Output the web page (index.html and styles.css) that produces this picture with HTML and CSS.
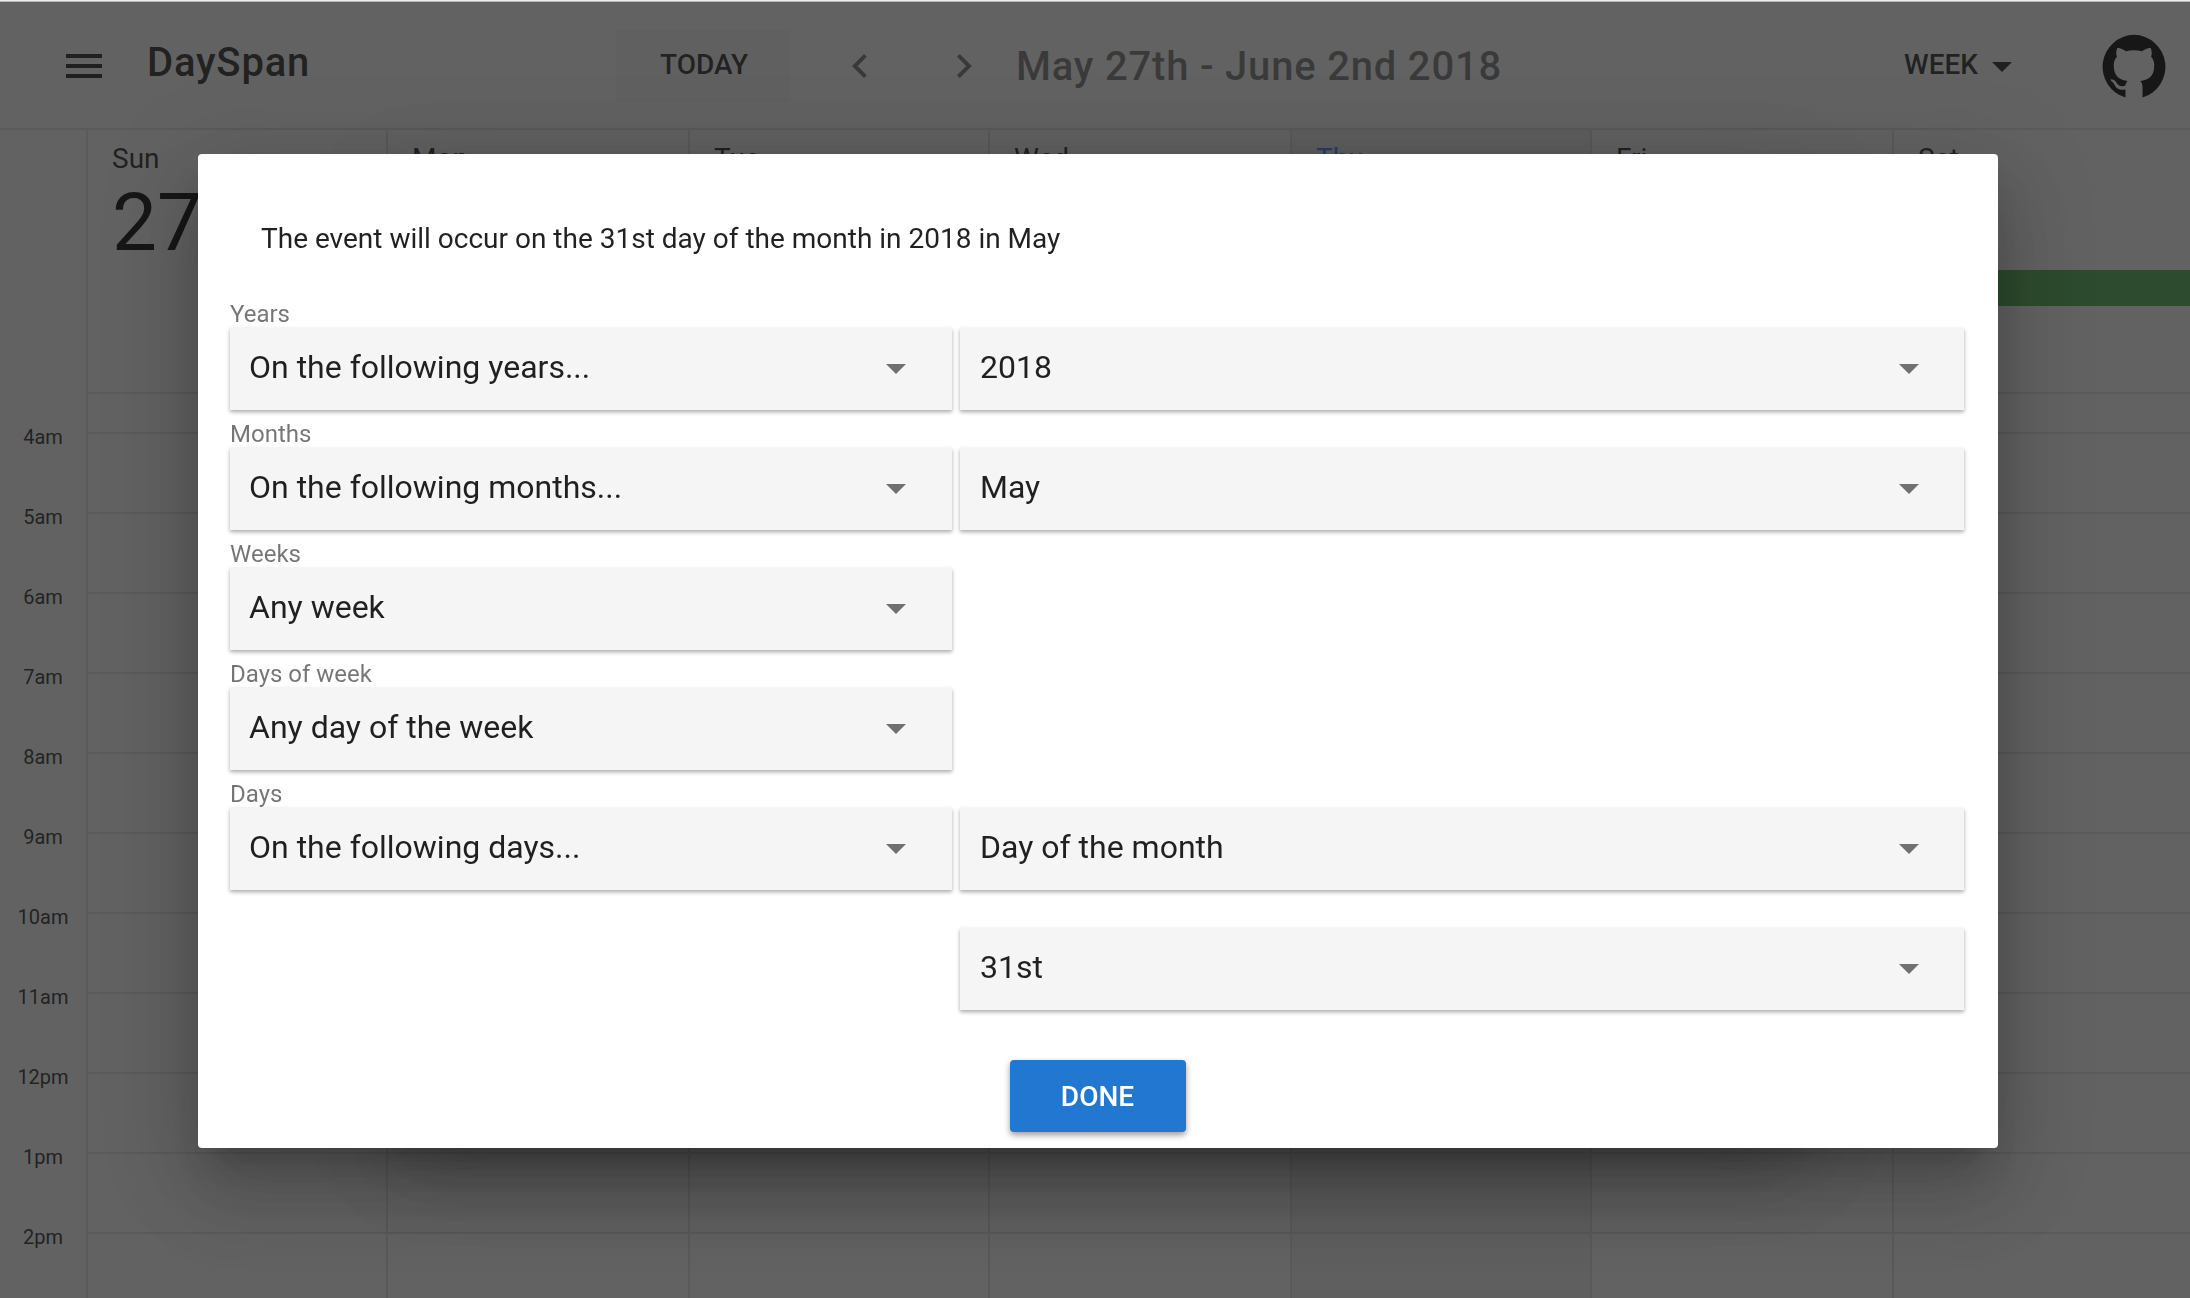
FILE: index.html
```
<!DOCTYPE html>
<html lang="en">
<head>
<meta charset="utf-8">
<title>DaySpan</title>
<link rel="stylesheet" href="styles.css">
</head>
<body>
<div class="app">
  <header class="toolbar">
    <svg class="menu-icon" viewBox="0 0 36 24"><path d="M0 0h36v4H0zM0 10h36v4H0zM0 20h36v4H0z"/></svg>
    <h1 class="brand">DaySpan</h1>
    <button class="today">TODAY</button>
    <svg class="chevron prev" viewBox="0 0 15 24"><path d="M14.8 2.8 12 0 0 12l12 12 2.8-2.8L5.600 12z"/></svg>
    <svg class="chevron next" viewBox="0 0 15 24"><path d="M0 2.800 2.800 0l12 12-12 12L0 21.200 9.200 12z"/></svg>
    <div class="range">May 27th - June 2nd 2018</div>
    <div class="view">WEEK<svg class="view-caret" viewBox="0 0 20 10"><path d="M0 0h20L10 10z"/></svg></div>
    <svg class="github" viewBox="0 0 24 24"><path d="M12 .3a12 12 0 0 0-3.200 23.500V20.800c-2.600.4-3.500-.6-4-1.600-.3-.6-.7-1.200-1.300-1.600-.4-.2-.6-.6 0-.6 1 0 1.700.9 2 1.400 1 1.400 2 1.300 3.300.9.100-.8.400-1.300.8-1.700-2.700-.3-5.200-1.500-5.200-5.900 0-1.300.4-2.300 1.200-3.200-.2-.4-.5-1.600.1-3.200 0 0 1-.3 3.300 1.200a11.500 11.500 0 0 1 6 0c2.300-1.500 3.300-1.200 3.300-1.200.6 1.600.3 2.800.1 3.200.8.900 1.200 1.900 1.200 3.200 0 4.500-2.500 5.600-5.200 5.900.5.500.8 1.300.8 2.400v3.800A12 12 0 0 0 12 .3z"/></svg>
  </header>
  <main class="week">
    <div class="day-heads">
      <div class="gutter"></div>
      <div class="day">Sun<b>27</b></div>
      <div class="day">Mon</div>
      <div class="day">Tue</div>
      <div class="day">Wed</div>
      <div class="day today-col">Thu</div>
      <div class="day">Fri</div>
      <div class="day sat">Sat<div class="event"></div></div>
    </div>
    <div class="hours">
      <div class="labels"><span>4am</span><span>5am</span><span>6am</span><span>7am</span><span>8am</span><span>9am</span><span>10am</span><span>11am</span><span>12pm</span><span>1pm</span><span>2pm</span></div>
      <div class="slots"></div><div class="slots"></div><div class="slots"></div><div class="slots"></div><div class="slots today-col"></div><div class="slots"></div><div class="slots"></div>
    </div>
  </main>
</div>
<div class="overlay">
  <div class="back-dialog"></div>
  <section class="dialog">
    <p class="summary">The event will occur on the 31st day of the month in 2018 in May</p>
    <div class="form">
      <label>Years</label>
      <div class="row"><div class="select">On the following years...<i></i></div><div class="select">2018<i></i></div></div>
      <label>Months</label>
      <div class="row"><div class="select">On the following months...<i></i></div><div class="select">May<i></i></div></div>
      <label>Weeks</label>
      <div class="row"><div class="select">Any week<i></i></div></div>
      <label>Days of week</label>
      <div class="row"><div class="select">Any day of the week<i></i></div></div>
      <label>Days</label>
      <div class="row"><div class="select">On the following days...<i></i></div><div class="select">Day of the month<i></i></div></div>
      <div class="row extra"><div class="select">31st<i></i></div></div>
    </div>
    <button class="done">DONE</button>
  </section>
</div>
</body>
</html>
```
FILE: styles.css
```
* { box-sizing: border-box; }
body {
  margin: 0;
  height: 1298px;
  overflow: hidden;
  font-family: Roboto, "Liberation Sans", sans-serif;
  color: rgba(0, 0, 0, .87);
  background: #fafafa;
}
button { font: inherit; border: 0; color: inherit; }

.app {
  height: 1298px;
  display: flex;
  flex-direction: column;
  padding-top: 2px;
  background: linear-gradient(#eef0f0 1px, #b4b8b8 1px, #b4b8b8 2px, transparent 2px);
}

.toolbar {
  height: 128px;
  flex: none;
  display: flex;
  align-items: center;
  padding-top: 2px;
  border-bottom: 2px solid #e0e0e0;
}
.menu-icon { width: 36px; height: 24px; margin-left: 66px; fill: rgba(0, 0, 0, .87); }
.brand { margin: -7px 0 0 45px; width: 469px; font-size: 40px; font-weight: 500; letter-spacing: .8px; line-height: 48px; }
.today {
  width: 175px;
  height: 72px;
  border-radius: 4px;
  font-size: 28px;
  font-weight: 500;
  line-height: 69px;
  padding: 0 0 3px 1px;
  background: #f5f5f5;
}
.chevron { width: 15px; height: 24px; fill: rgba(0, 0, 0, .54); }
.prev { margin-left: 61px; }
.next { margin-left: 90px; }
.range { margin-left: 44px; width: 888px; font-size: 40px; font-weight: 500; letter-spacing: .8px; color: rgba(0, 0, 0, .54); }
.view { display: flex; align-items: center; width: 198px; padding-bottom: 3px; font-size: 28px; font-weight: 500; }
.view-caret { width: 20px; height: 10px; margin: 5px 0 0 14px; fill: rgba(0, 0, 0, .87); }
.github { width: 64px; height: 64px; fill: #000; }

.week { flex: 1; display: flex; flex-direction: column; }
.day-heads, .hours {
  display: grid;
  grid-template-columns: 86px 300px 302px 300px 302px 300px 302px 1fr;
}
.day-heads { height: 264px; }
.day {
  border-left: 2px solid #e0e0e0;
  border-bottom: 2px solid #e0e0e0;
  padding: 12px 0 0 24px;
  font-size: 28px;
  line-height: 33px;
}
.day b { display: block; margin-top: 1px; font-size: 80px; font-weight: 400; line-height: 94px; color: #000; }
.today-col { background-color: #f0f0f0; color: #4285f4; }
.event { height: 36px; margin: 95px 0 0 -24px; background: #4caf50; }
.hours { flex: 1; }
.labels { display: flex; flex-direction: column; align-items: center; padding-top: 25px; font-size: 20px; line-height: 36px; }
.labels span { height: 80px; }
.slots {
  border-left: 2px solid #e0e0e0;
  background-image: linear-gradient(#e0e0e0 2px, transparent 2px);
  background-size: 100% 80px;
  background-position: 0 38px;
}

.overlay {
  position: fixed;
  inset: 2px 0 0;
  background: rgba(33, 33, 33, .7);
}
.back-dialog, .dialog {
  position: absolute;
  left: 198px;
  width: 1800px;
  top: 152px;
  height: 994px;
  border-radius: 4px;
  background: #fff;
  box-shadow: 0 22px 30px -14px rgba(0, 0, 0, .2), 0 48px 76px 6px rgba(0, 0, 0, .14), 0 18px 92px 16px rgba(0, 0, 0, .12);
}
.back-dialog { left: 398px; width: 1400px; top: 176px; height: 946px; }
.dialog { display: flex; flex-direction: column; padding: 64px 33px 0 32px; }
.summary { margin: 0 0 0 31px; height: 78px; font-size: 28px; line-height: 42px; }
.form { display: flex; flex-direction: column; }
.form label { height: 32px; padding-top: 4px; font-size: 24px; line-height: 28px; color: rgba(0, 0, 0, .54); }
.row { display: grid; grid-template-columns: 722px 1004px; gap: 8px; height: 82px; margin-bottom: 6px; }
.select {
  display: flex;
  align-items: center;
  justify-content: space-between;
  height: 82px;
  padding: 0 46px 4px 19px;
  font-size: 32px;
  background: #f5f5f5;
  box-shadow: 0 2px 5px rgba(0, 0, 0, .2), 0 2px 3px rgba(0, 0, 0, .16);
}
.select:nth-child(2), .extra .select { padding: 0 45px 4px 20px; }
.select i {
  margin-top: 4px;
  border: 10px solid transparent;
  border-top-color: rgba(0, 0, 0, .54);
  border-bottom: 0;
}
.extra { margin-top: 32px; }
.extra .select { grid-column: 2; }
.done {
  align-self: center;
  flex: none;
  width: 176px;
  height: 72px;
  margin-top: 44px;
  border-radius: 4px;
  background: #2277d1;
  color: #fff;
  font-size: 28px;
  font-weight: 500;
  box-shadow: 0 3px 6px rgba(0, 0, 0, .4);
}
```
